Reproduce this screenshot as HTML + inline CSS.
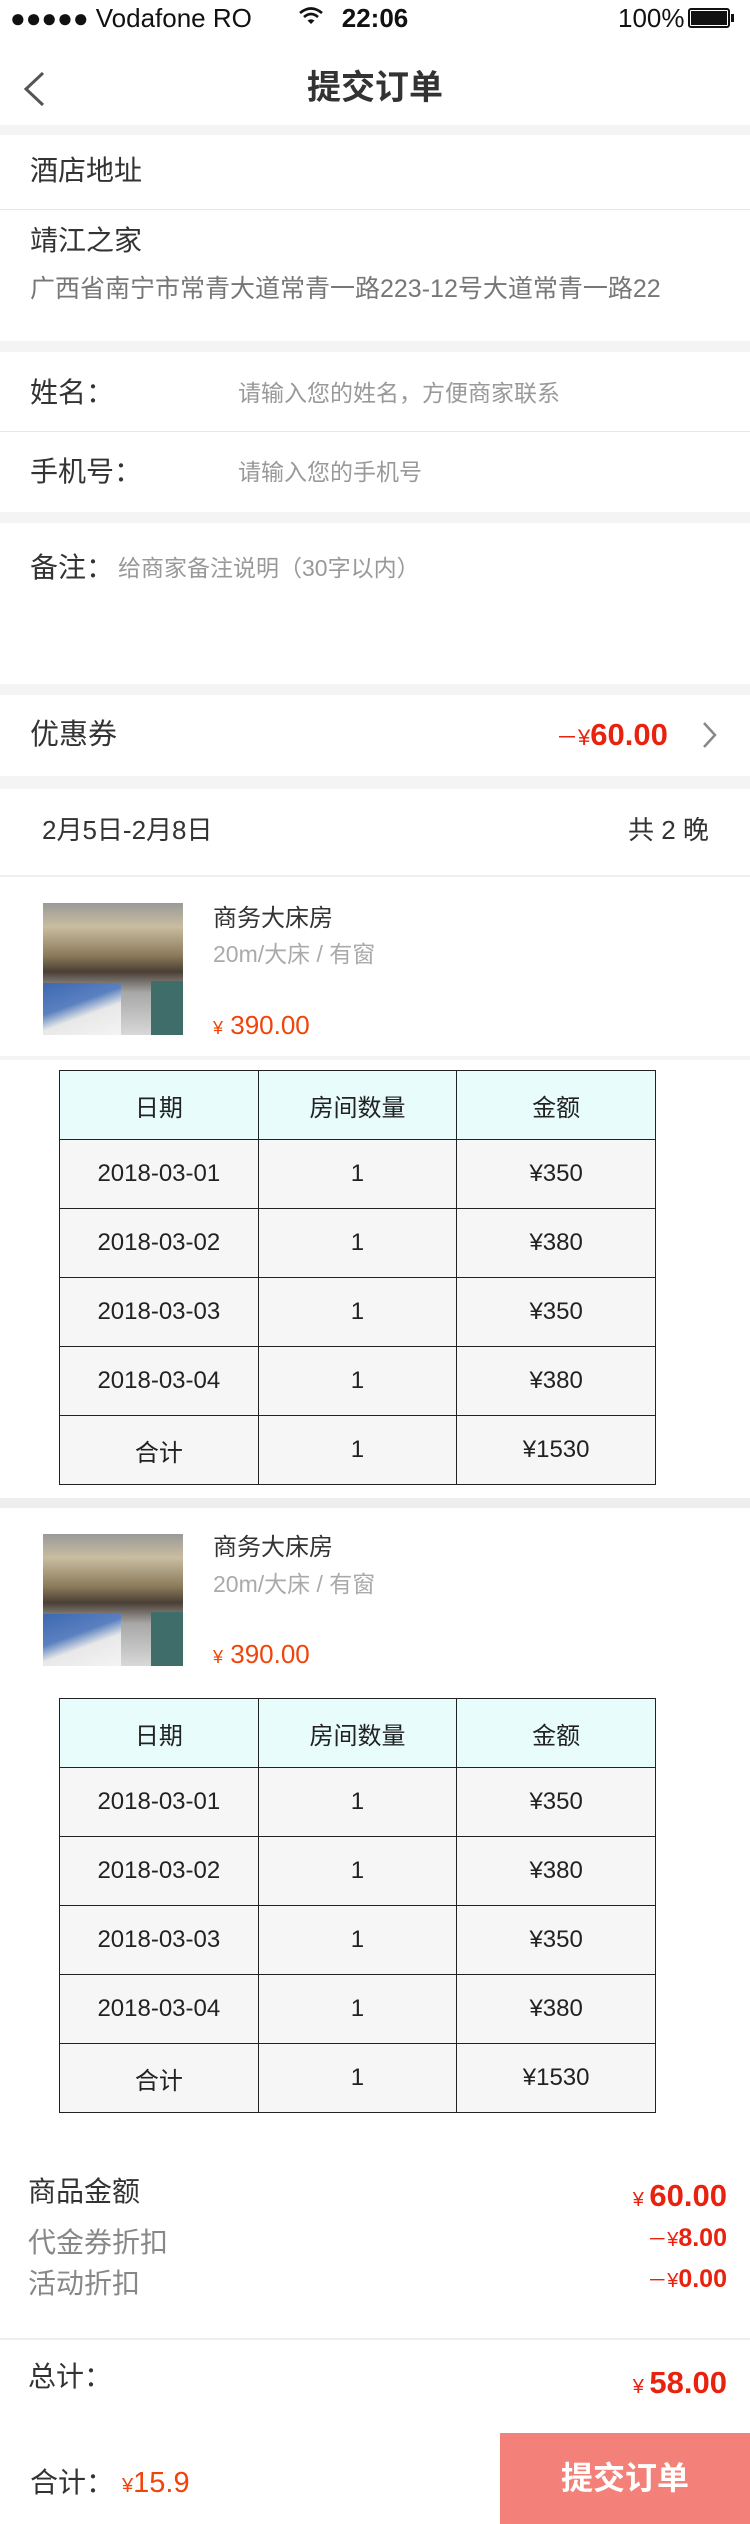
<!DOCTYPE html>
<html><head><meta charset="utf-8"><style>
*{margin:0;padding:0;box-sizing:border-box}
body{width:750px;height:2524px;background:#fff;font-family:"Liberation Sans","Noto Sans CJK SC",sans-serif;color:#333;position:relative;overflow:hidden}
.a{position:absolute;white-space:nowrap;line-height:1}
.g{position:absolute;left:0;width:750px;background:#f4f4f4}
.l{position:absolute;left:0;width:750px;height:1px;background:#e6e6e6}
.red{color:#e8220e}
.img{position:absolute;left:43px;width:140px;height:132px;background:linear-gradient(180deg,#9a9a98 0%,#c9bda0 18%,#8a7a5a 40%,#4a3f35 52%,#a8a8a8 68%,#d8d8d8 100%);overflow:hidden}
.img:before{content:"";position:absolute;left:0;top:80px;width:78px;height:52px;background:linear-gradient(160deg,#3d68b0 0%,#5a80c0 40%,#e8e8e8 60%,#f4f4f4 100%)}
.img:after{content:"";position:absolute;right:0;top:78px;width:32px;height:54px;background:#3f6e6a}
table{position:absolute;left:59px;width:597px;border-collapse:collapse;font-size:24px;color:#222;text-align:center}
td{border:1.5px solid #222;width:199px;height:69px;background:#f6f6f6}
tr.h td{background:#e9fcfc}
</style></head><body>
<div class="a" style="left:10px;top:5px;font-size:26px;color:#111">●●●●● Vodafone RO</div>
<svg class="a" style="left:298px;top:6px" width="26" height="20" viewBox="0 0 26 20"><path d="M2 7 Q13 -2 24 7" stroke="#111" stroke-width="2.6" fill="none"/><path d="M6 11 Q13 5 20 11" stroke="#111" stroke-width="2.6" fill="none"/><path d="M13 18 L9.5 14.5 Q13 12 16.5 14.5 Z" fill="#111"/></svg>
<div class="a" style="left:0;width:750px;text-align:center;top:5px;font-size:26px;font-weight:bold;color:#111">22:06</div>
<div class="a" style="left:618px;top:5px;font-size:26px;color:#111">100%</div>
<div class="a" style="left:688px;top:8px;width:42px;height:20px;border:2px solid #111;border-radius:3px;padding:1px"><div style="width:100%;height:100%;background:#111"></div></div>
<div class="a" style="left:731px;top:14px;width:3px;height:8px;background:#111"></div>
<svg class="a" style="left:20px;top:70px" width="30" height="38"><path d="M23 3 L6 19 L23 35" stroke="#555" stroke-width="3" fill="none"/></svg>
<div class="a" style="left:0;width:750px;text-align:center;top:71px;font-size:34px;font-weight:bold;color:#333">提交订单</div>
<div class="g" style="top:125px;height:10px"></div>
<div class="a" style="left:30px;top:157px;font-size:28px">酒店地址</div>
<div class="l" style="top:209px"></div>
<div class="a" style="left:30px;top:227px;font-size:28px">靖江之家</div>
<div class="a" style="left:30px;top:277px;font-size:25px;color:#777">广西省南宁市常青大道常青一路223-12号大道常青一路22</div>
<div class="g" style="top:341px;height:11px"></div>
<div class="a" style="left:30px;top:379px;font-size:28px">姓名：</div>
<div class="a" style="left:238px;top:382px;font-size:23px;color:#999">请输入您的姓名，方便商家联系</div>
<div class="l" style="top:431px"></div>
<div class="a" style="left:30px;top:458px;font-size:28px">手机号：</div>
<div class="a" style="left:238px;top:461px;font-size:23px;color:#999">请输入您的手机号</div>
<div class="g" style="top:512px;height:11px"></div>
<div class="a" style="left:30px;top:554px;font-size:28px">备注：</div>
<div class="a" style="left:118px;top:557px;font-size:23px;color:#999">给商家备注说明（30字以内）</div>
<div class="g" style="top:684px;height:11px"></div>
<div class="a" style="left:30px;top:721px;font-size:29px">优惠券</div>
<div class="a red" style="left:556px;top:719px;font-size:31px;font-weight:bold"><span style="font-size:22px;font-weight:normal">－¥</span>60.00</div>
<svg class="a" style="left:700px;top:720px" width="20" height="30"><path d="M4 3 L15 15 L4 27" stroke="#888" stroke-width="2.5" fill="none"/></svg>
<div class="g" style="top:776px;height:13px"></div>
<div class="a" style="left:42px;top:817px;font-size:26px">2月5日-2月8日</div>
<div class="a" style="left:628px;top:817px;font-size:26px">共 2 晚</div>
<div class="l" style="top:875px;height:2px;background:#f0f0f0"></div>
<div class="img" style="top:903px"></div>
<div class="a" style="left:213px;top:907px;font-size:24px">商务大床房</div>
<div class="a" style="left:213px;top:943px;font-size:23px;color:#aaa">20m/大床 / 有窗</div>
<div class="a" style="left:213px;top:1012px;font-size:26px;color:#f0440a"><span style="font-size:18px">¥</span> 390.00</div>
<div class="g" style="top:1056px;height:4px"></div>
<table style="top:1070px"><tr class="h"><td>日期</td><td>房间数量</td><td>金额</td></tr>
<tr><td>2018-03-01</td><td>1</td><td>¥350</td></tr>
<tr><td>2018-03-02</td><td>1</td><td>¥380</td></tr>
<tr><td>2018-03-03</td><td>1</td><td>¥350</td></tr>
<tr><td>2018-03-04</td><td>1</td><td>¥380</td></tr>
<tr><td>合计</td><td>1</td><td>¥1530</td></tr></table>
<div class="g" style="top:1498px;height:10px;background:#eee"></div>
<div class="img" style="top:1534px"></div>
<div class="a" style="left:213px;top:1536px;font-size:24px">商务大床房</div>
<div class="a" style="left:213px;top:1573px;font-size:23px;color:#aaa">20m/大床 / 有窗</div>
<div class="a" style="left:213px;top:1641px;font-size:26px;color:#f0440a"><span style="font-size:18px">¥</span> 390.00</div>
<table style="top:1698px"><tr class="h"><td>日期</td><td>房间数量</td><td>金额</td></tr>
<tr><td>2018-03-01</td><td>1</td><td>¥350</td></tr>
<tr><td>2018-03-02</td><td>1</td><td>¥380</td></tr>
<tr><td>2018-03-03</td><td>1</td><td>¥350</td></tr>
<tr><td>2018-03-04</td><td>1</td><td>¥380</td></tr>
<tr><td>合计</td><td>1</td><td>¥1530</td></tr></table>
<div class="a" style="left:28px;top:2178px;font-size:28px">商品金额</div>
<div class="a" style="left:28px;top:2229px;font-size:28px;color:#888">代金券折扣</div>
<div class="a" style="left:28px;top:2270px;font-size:28px;color:#888">活动折扣</div>
<div class="a red" style="right:23px;top:2180px;font-size:31px;font-weight:bold"><span style="font-size:20px;font-weight:normal">¥ </span>60.00</div>
<div class="a red" style="right:23px;top:2226px;font-size:25px;font-weight:bold"><span style="font-size:20px;font-weight:normal">－¥</span>8.00</div>
<div class="a red" style="right:23px;top:2267px;font-size:25px;font-weight:bold"><span style="font-size:20px;font-weight:normal">－¥</span>0.00</div>
<div class="l" style="top:2338px;height:2px;background:#eee"></div>
<div class="a" style="left:28px;top:2363px;font-size:28px">总计：</div>
<div class="a red" style="right:23px;top:2367px;font-size:31px;font-weight:bold"><span style="font-size:20px;font-weight:normal">¥ </span>58.00</div>
<div class="a" style="left:30px;top:2469px;font-size:28px">合计：</div>
<div class="a" style="left:122px;top:2469px;font-size:29px;color:#f0440a"><span style="font-size:20px">¥</span>15.9</div>
<div class="a" style="left:500px;top:2433px;width:250px;height:91px;background:#f4807a"></div>
<div class="a" style="left:500px;width:250px;text-align:center;top:2462px;font-size:32px;font-weight:bold;color:#fff">提交订单</div>
</body></html>
